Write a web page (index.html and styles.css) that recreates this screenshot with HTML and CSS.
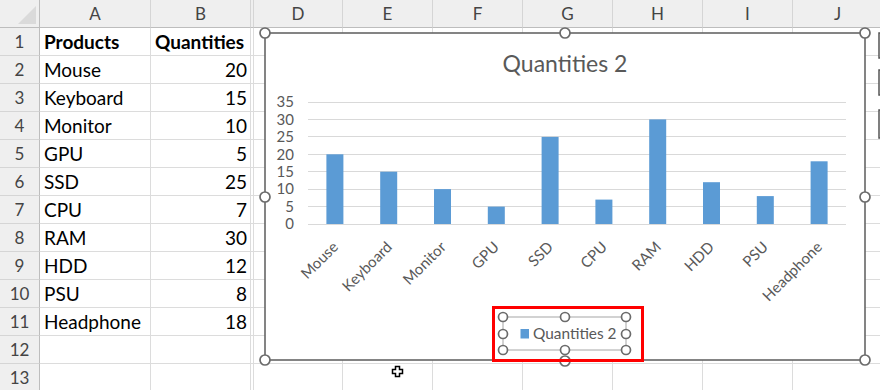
FILE: index.html
```html
<!DOCTYPE html>
<html>
<head>
<meta charset="utf-8">
<link rel="stylesheet" href="styles.css">
</head>
<body>
<div class="sheet">
  <div class="c h corner"><span class="tri"></span></div>
  <div class="c h">A</div><div class="c h">B</div><div class="c h hid"></div><div class="c h">D</div><div class="c h">E</div><div class="c h">F</div><div class="c h">G</div><div class="c h">H</div><div class="c h">I</div><div class="c h">J</div>

  <div class="c rh">1</div><div class="c b">Products</div><div class="c b">Quantities</div><div class="c hid"></div><div class="c"></div><div class="c"></div><div class="c"></div><div class="c"></div><div class="c"></div><div class="c"></div><div class="c"></div>
  <div class="c rh">2</div><div class="c">Mouse</div><div class="c num">20</div><div class="c hid"></div><div class="c"></div><div class="c"></div><div class="c"></div><div class="c"></div><div class="c"></div><div class="c"></div><div class="c"></div>
  <div class="c rh">3</div><div class="c">Keyboard</div><div class="c num">15</div><div class="c hid"></div><div class="c"></div><div class="c"></div><div class="c"></div><div class="c"></div><div class="c"></div><div class="c"></div><div class="c"></div>
  <div class="c rh">4</div><div class="c">Monitor</div><div class="c num">10</div><div class="c hid"></div><div class="c"></div><div class="c"></div><div class="c"></div><div class="c"></div><div class="c"></div><div class="c"></div><div class="c"></div>
  <div class="c rh">5</div><div class="c">GPU</div><div class="c num">5</div><div class="c hid"></div><div class="c"></div><div class="c"></div><div class="c"></div><div class="c"></div><div class="c"></div><div class="c"></div><div class="c"></div>
  <div class="c rh">6</div><div class="c">SSD</div><div class="c num">25</div><div class="c hid"></div><div class="c"></div><div class="c"></div><div class="c"></div><div class="c"></div><div class="c"></div><div class="c"></div><div class="c"></div>
  <div class="c rh">7</div><div class="c">CPU</div><div class="c num">7</div><div class="c hid"></div><div class="c"></div><div class="c"></div><div class="c"></div><div class="c"></div><div class="c"></div><div class="c"></div><div class="c"></div>
  <div class="c rh">8</div><div class="c">RAM</div><div class="c num">30</div><div class="c hid"></div><div class="c"></div><div class="c"></div><div class="c"></div><div class="c"></div><div class="c"></div><div class="c"></div><div class="c"></div>
  <div class="c rh">9</div><div class="c">HDD</div><div class="c num">12</div><div class="c hid"></div><div class="c"></div><div class="c"></div><div class="c"></div><div class="c"></div><div class="c"></div><div class="c"></div><div class="c"></div>
  <div class="c rh">10</div><div class="c">PSU</div><div class="c num">8</div><div class="c hid"></div><div class="c"></div><div class="c"></div><div class="c"></div><div class="c"></div><div class="c"></div><div class="c"></div><div class="c"></div>
  <div class="c rh">11</div><div class="c">Headphone</div><div class="c num">18</div><div class="c hid"></div><div class="c"></div><div class="c"></div><div class="c"></div><div class="c"></div><div class="c"></div><div class="c"></div><div class="c"></div>
  <div class="c rh">12</div><div class="c"></div><div class="c"></div><div class="c hid"></div><div class="c"></div><div class="c"></div><div class="c"></div><div class="c"></div><div class="c"></div><div class="c"></div><div class="c"></div>
  <div class="c rh">13</div><div class="c"></div><div class="c"></div><div class="c hid"></div><div class="c"></div><div class="c"></div><div class="c"></div><div class="c"></div><div class="c"></div><div class="c"></div><div class="c"></div>
</div>

<svg class="chart" width="880" height="390" viewBox="0 0 880 390" xmlns="http://www.w3.org/2000/svg">
  <!-- chart side buttons (partially visible) -->
  <g class="sidebtn">
    <rect x="879" y="33" width="20" height="25"/>
    <rect x="879" y="70" width="20" height="25"/>
    <rect x="879" y="110" width="20" height="28"/>
  </g>
  <!-- chart area -->
  <rect class="frame" x="265" y="33" width="600" height="327"/>
  <text class="title" x="565" y="72" text-anchor="middle">Quantities 2</text>

  <g class="grid">
    <line x1="308" y1="102.5" x2="846" y2="102.5"/>
    <line x1="308" y1="119.5" x2="846" y2="119.5"/>
    <line x1="308" y1="136.5" x2="846" y2="136.5"/>
    <line x1="308" y1="154.5" x2="846" y2="154.5"/>
    <line x1="308" y1="171.5" x2="846" y2="171.5"/>
    <line x1="308" y1="189.5" x2="846" y2="189.5"/>
    <line x1="308" y1="206.5" x2="846" y2="206.5"/>
    <line x1="308" y1="224.5" x2="846" y2="224.5"/>
  </g>
  <g class="ylab" text-anchor="end">
    <text x="294" y="107">35</text>
    <text x="294" y="124.5">30</text>
    <text x="294" y="142">25</text>
    <text x="294" y="159.5">20</text>
    <text x="294" y="177">15</text>
    <text x="294" y="194">10</text>
    <text x="294" y="211.5">5</text>
    <text x="294" y="229">0</text>
  </g>
  <g class="bars">
    <rect x="326.4" y="154.3" width="17" height="69.7"/>
    <rect x="380.2" y="171.7" width="17" height="52.3"/>
    <rect x="434" y="189.1" width="17" height="34.9"/>
    <rect x="487.8" y="206.6" width="17" height="17.4"/>
    <rect x="541.6" y="136.9" width="17" height="87.1"/>
    <rect x="595.4" y="199.6" width="17" height="24.4"/>
    <rect x="649.2" y="119.4" width="17" height="104.6"/>
    <rect x="703" y="182.2" width="17" height="41.8"/>
    <rect x="756.8" y="196.1" width="17" height="27.9"/>
    <rect x="810.6" y="161.3" width="17" height="62.7"/>
  </g>
  <g class="xlab" text-anchor="end">
    <text x="339" y="248" transform="rotate(-45 339 248)">Mouse</text>
    <text x="393" y="248" transform="rotate(-45 393 248)">Keyboard</text>
    <text x="447" y="248" transform="rotate(-45 447 248)">Monitor</text>
    <text x="500" y="248" transform="rotate(-45 500 248)">GPU</text>
    <text x="554" y="248" transform="rotate(-45 554 248)">SSD</text>
    <text x="608" y="248" transform="rotate(-45 608 248)">CPU</text>
    <text x="662" y="248" transform="rotate(-45 662 248)">RAM</text>
    <text x="715" y="248" transform="rotate(-45 715 248)">HDD</text>
    <text x="769" y="248" transform="rotate(-45 769 248)">PSU</text>
    <text x="823" y="248" transform="rotate(-45 823 248)">Headphone</text>
  </g>

  <!-- legend -->
  <rect class="legbox" x="503" y="317" width="123" height="33"/>
  <rect class="swatch" x="520.5" y="329" width="8.5" height="9.5"/>
  <text class="legtext" x="533" y="339">Quantities 2</text>

  <!-- chart handles -->
  <g class="handle">
    <circle cx="265" cy="33" r="5"/>
    <circle cx="565" cy="33" r="5"/>
    <circle cx="865" cy="33" r="5"/>
    <circle cx="265" cy="197" r="5"/>
    <circle cx="865" cy="197" r="5"/>
    <circle cx="265" cy="360" r="5"/>
    <circle cx="565" cy="361" r="5"/>
    <circle cx="865" cy="360" r="5"/>
  </g>
  <!-- legend handles -->
  <g class="handle">
    <circle cx="503" cy="317" r="4.5"/>
    <circle cx="565" cy="317" r="4.5"/>
    <circle cx="626" cy="317" r="4.5"/>
    <circle cx="503" cy="334" r="4.5"/>
    <circle cx="626" cy="334" r="4.5"/>
    <circle cx="503" cy="350" r="4.5"/>
    <circle cx="565" cy="350" r="4.5"/>
    <circle cx="626" cy="350" r="4.5"/>
  </g>
  <!-- red highlight -->
  <rect class="hl" x="493.5" y="307.5" width="149" height="53"/>

  <!-- move cursor -->
  <path class="cursor" d="M395.5 366.5 h4 v3 h3 v4 h-3 v3 h-4 v-3 h-3 v-4 h3 z"/>
</svg>
</body>
</html>
```
FILE: styles.css
```css
html, body {
  margin: 0;
  padding: 0;
}
body {
  width: 880px;
  height: 390px;
  overflow: hidden;
  position: relative;
  background: #ffffff;
  font-family: Lato, "Open Sans", sans-serif;
}
.sheet {
  display: grid;
  grid-template-columns: 40px 111px 100px 3px 89px 90px 90px 90px 90px 90px 90px;
  grid-auto-rows: 28px;
  width: 883px;
}
.c {
  box-sizing: border-box;
  border-right: 1px solid #dcdcdc;
  border-bottom: 1px solid #dcdcdc;
  font-size: 19px;
  line-height: 27px;
  color: #000;
  padding: 0 0 0 4px;
  white-space: nowrap;
  overflow: hidden;
}
.num {
  text-align: right;
  padding: 0 3px 0 0;
}
.b {
  font-weight: 700;
}
.hid {
  padding: 0;
}
.h {
  background: #efefef;
  color: #444;
  text-align: center;
  font-size: 17px;
  padding: 0;
  border-right-color: #d5d5d5;
  border-bottom-color: #bdbdbd;
}
.rh {
  background: #efefef;
  color: #444;
  text-align: center;
  font-size: 17px;
  padding: 0;
  border-right-color: #bdbdbd;
  border-bottom-color: #d5d5d5;
}
.corner {
  position: relative;
  border-right-color: #bdbdbd;
}
.tri {
  position: absolute;
  right: 3px;
  bottom: 3px;
  width: 0;
  height: 0;
  border-left: 18px solid transparent;
  border-bottom: 18px solid #dadada;
}
.chart {
  position: absolute;
  left: 0;
  top: 0;
  font-family: Lato, "Open Sans", sans-serif;
}
.frame {
  fill: #ffffff;
  stroke: #666666;
  stroke-width: 1.6;
}
.sidebtn rect {
  fill: #ffffff;
  stroke: #555555;
  stroke-width: 1.5;
}
.title {
  font-size: 23px;
  fill: #595959;
}
.grid line {
  stroke: #d9d9d9;
  stroke-width: 1;
}
.ylab text {
  font-size: 15px;
  fill: #595959;
}
.xlab text {
  font-size: 15px;
  fill: #595959;
}
.bars rect {
  fill: #5b9bd5;
}
.legbox {
  fill: none;
  stroke: #a6a6a6;
  stroke-width: 1;
}
.swatch {
  fill: #5b9bd5;
}
.legtext {
  font-size: 15.4px;
  fill: #595959;
}
.handle circle {
  fill: #ffffff;
  stroke: #6b6b6b;
  stroke-width: 1.7;
}
.hl {
  fill: none;
  stroke: #ff0000;
  stroke-width: 3;
}
.cursor {
  fill: #ffffff;
  stroke: #000000;
  stroke-width: 1.5;
}
```
